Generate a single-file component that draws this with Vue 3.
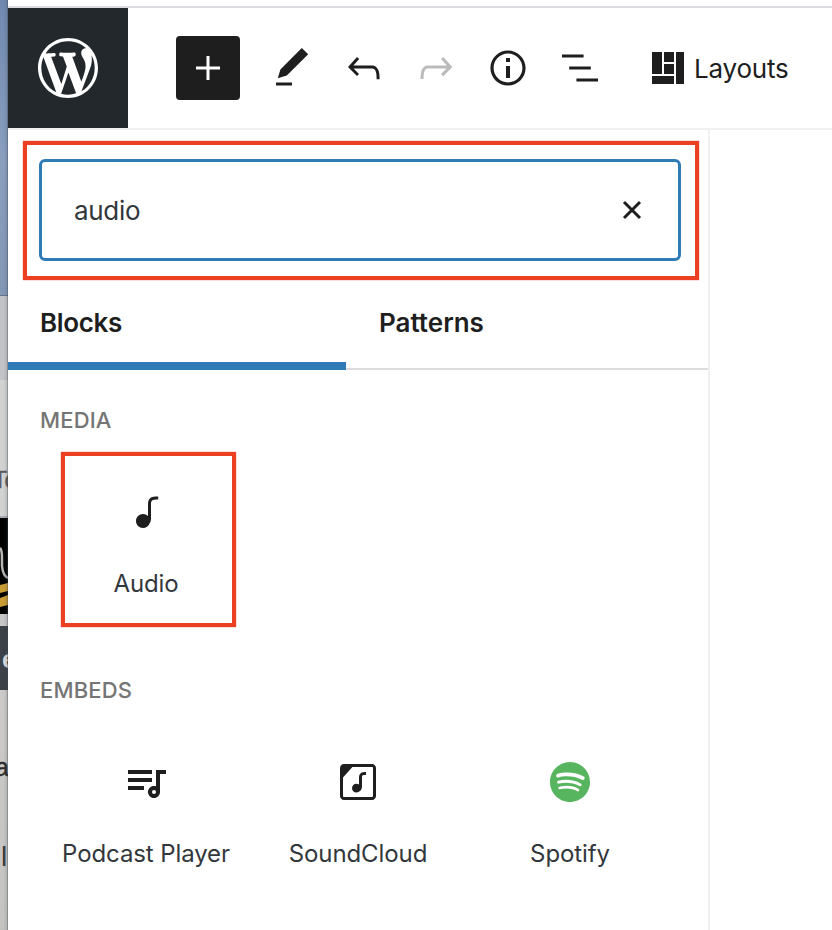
<script setup>
const tools = [
  { name: 'edit', path: 'M20.1 5.1L16.9 2 6.2 12.7l-1.3 4.4 4.5-1.3L20.1 5.1zM4 20.8h8v-1.5H4v1.5z' },
  { name: 'undo', path: 'M18.3 11.7c-.6-.6-1.4-.9-2.3-.9H6.7l2.9-3.3-1.1-1-4.5 5L8.5 16l1-1-2.7-2.7H16c.5 0 .9.2 1.3.5 1 1 1 3.4 1 4.5v.3h1.5v-.2c0-1.5 0-4.3-1.5-5.7z' },
  { name: 'redo', muted: true, path: 'M15.6 6.5l-1.1 1 2.9 3.3H8c-.9 0-1.7.3-2.3.9-1.4 1.5-1.4 4.2-1.4 5.6v.2h1.5v-.3c0-1.1 0-3.5 1-4.5.3-.3.7-.5 1.3-.5h9.2L14.5 15l1.1 1.1 4.6-4.6-4.6-5z' },
  { name: 'info', path: 'M12 3.2c-4.8 0-8.8 3.9-8.8 8.8 0 4.8 3.9 8.8 8.8 8.8 4.8 0 8.8-3.9 8.8-8.8 0-4.8-4-8.8-8.8-8.8zm0 16c-4 0-7.2-3.3-7.2-7.2C4.8 8 8 4.8 12 4.8s7.2 3.3 7.2 7.2c0 4-3.2 7.2-7.2 7.2zM11 17h2v-6h-2v6zm0-8h2V7h-2v2z' },
  { name: 'list', path: 'M13.8 5.2H3v1.5h10.8V5.2zm-3.6 12v1.5H21v-1.5H10.2zm7.2-6H6.6v1.5h10.8v-1.5z' }
]

const media = [
  { name: 'Audio', cls: 'audio', path: 'M17.7 4.3c-1.2 0-2.8 0-3.8 1-.6.6-.9 1.5-.9 2.6V14c-.6-.6-1.5-1-2.5-1C8.6 13 7 14.6 7 16.5S8.6 20 10.5 20c1.5 0 2.8-1 3.3-2.3.5-.8.7-1.8.7-2.5V7.9c0-.7.2-1.2.5-1.6.6-.6 1.8-.6 2.8-.6h.3V4.3h-.4z' }
]

const embeds = [
  { name: 'Podcast Player', cls: 'podcast', path: 'M15 6H3v2h12V6zm0 4H3v2h12v-2zM3 16h8v-2H3v2zM17 6v8.18c-.31-.11-.65-.18-1-.18-1.66 0-3 1.34-3 3s1.34 3 3 3 3-1.34 3-3V8h3V6h-5zM16 16a1 1 0 1 1 0 2 1 1 0 0 1 0-2z' },
  { name: 'SoundCloud', cls: 'soundcloud', path: 'M19 3H5c-1.1 0-2 .9-2 2v14c0 1.1.9 2 2 2h14c1.1 0 2-.9 2-2V5c0-1.1-.9-2-2-2zm.5 16c0 .3-.2.5-.5.5H5c-.3 0-.5-.2-.5-.5V9.8l4.7-5.3H19c.3 0 .5.2.5.5v14zM13.2 7.7c-.4.4-.7 1.1-.7 1.9v3.7c-.4-.3-.8-.4-1.3-.4-1.2 0-2.2 1-2.2 2.2 0 1.2 1 2.2 2.2 2.2.5 0 1-.2 1.4-.5.9-.6 1.4-1.6 1.4-2.6V9.6c0-.4.1-.6.2-.8.3-.3 1-.3 1.6-.3h.2V7h-.2c-.7 0-1.8 0-2.6.7z' },
  { name: 'Spotify', cls: 'spotify', path: 'm12 2c-5.5 0-10 4.5-10 10s4.5 10 10 10 10-4.5 10-10s-4.5-10-10-10m4.6 14.4c-.2.3-.6.4-.9.2-2.4-1.4-5.3-1.8-8.8-1-.3.1-.7-.1-.7-.5-.1-.3.1-.7.5-.7 3.8-.9 7.1-.5 9.7 1.1.2.2.3.6.2.9m1.2-2.7c-.3.4-.8.5-1.2.3-2.7-1.6-6.8-2.1-9.9-1.2-.4.2-.9 0-1.1-.4s.1-.9.5-1c3.6-1.1 8.1-.6 11.2 1.3.4.1.6.6.5 1m.1-2.8c-3.2-1.9-8.5-2.1-11.6-1.2-.5.2-1-.1-1.2-.6-.1-.5.2-1 .7-1.2 3.5-1.1 9.4-.9 13.1 1.3.4.3.6.9.3 1.3-.3.5-.9.6-1.3.4' }
]
</script>

<template>
  <div class="screen">
    <aside class="behind">
      <div class="sky"></div>
      <div class="chrome"></div>
      <div class="page-top"><span class="peek peek-to">To</span></div>
      <div class="banner">
        <svg width="8" height="96" viewBox="0 0 8 96">
          <path d="M0 30Q2 32 2 40V48Q3 58 8 60" fill="none" stroke="#b5b5b5" stroke-width="2.5" />
          <path d="M0 67L8 65V73L0 75zM0 80L8 77V87L0 89z" fill="#c99c35" />
        </svg>
      </div>
      <div class="gap"></div>
      <div class="menu"><span class="peek peek-e">e</span></div>
      <div class="page">
        <span class="peek peek-a">a</span>
        <span class="peek peek-l">l</span>
      </div>
    </aside>

    <main class="editor">
      <header class="topbar">
        <div class="wp">
          <svg width="60" height="60" viewBox="0 0 20 20">
            <path d="M20 10c0-5.51-4.49-10-10-10C4.48 0 0 4.49 0 10c0 5.52 4.48 10 10 10 5.51 0 10-4.48 10-10zM7.78 15.37L4.37 6.22c.55-.02 1.17-.08 1.17-.08.5-.06.44-1.13-.06-1.11 0 0-1.45.11-2.37.11-.18 0-.37 0-.58-.01C4.12 2.69 6.87 1.11 10 1.11c2.33 0 4.45.87 6.05 2.34-.68-.11-1.65.39-1.65 1.58 0 .74.45 1.36.9 2.1.35.61.55 1.36.55 2.46 0 1.49-1.4 5-1.4 5l-3.03-8.37c.54-.02.82-.17.82-.17.5-.05.44-1.25-.06-1.22 0 0-1.44.12-2.38.12-.87 0-2.33-.12-2.33-.12-.5-.03-.56 1.2-.06 1.22l.92.08 1.26 3.41zM17.41 10c.24-.64.74-1.87.43-4.25.7 1.29 1.05 2.71 1.05 4.25 0 3.29-1.73 6.24-4.4 7.78.97-2.59 1.94-5.2 2.92-7.78zM6.1 18.09C3.12 16.65 1.11 13.53 1.11 10c0-1.3.23-2.48.72-3.59C3.25 10.3 4.67 14.2 6.1 18.09zm4.03-6.63l2.58 6.98c-.86.29-1.76.45-2.71.45-.79 0-1.57-.11-2.29-.33.81-2.38 1.62-4.74 2.42-7.1z" />
          </svg>
        </div>
        <button class="inserter" aria-label="Toggle block inserter">
          <svg width="24" height="24" viewBox="0 0 24 24"><path d="M12 0V24M0 12H24" stroke="#fff" stroke-width="3" /></svg>
        </button>
        <div class="tools">
          <svg v-for="t in tools" :key="t.name" :class="{ muted: t.muted }" width="48" height="48" viewBox="0 0 24 24"><path :d="t.path" /></svg>
        </div>
        <div class="layouts">
          <svg width="32" height="32" viewBox="0 0 32 32"><path d="M0 0h10v22H0zM12 0h10v10H12zM12 12h10v10H12zM24 0h8v32h-8zM0 24h22v8H0z" /></svg>
          <span>Layouts</span>
        </div>
      </header>

      <section class="panel">
        <div class="callout search-callout">
          <div class="search">
            <span>audio</span>
            <svg width="20" height="20" viewBox="0 0 20 20"><path d="M2 2L18 18M18 2L2 18" stroke="#1e1e1e" stroke-width="3" /></svg>
          </div>
        </div>
        <nav class="tabs">
          <div class="tab active">Blocks</div>
          <div class="tab second">Patterns</div>
        </nav>
        <h2 class="heading">Media</h2>
        <div class="grid media-grid">
          <div v-for="b in media" :key="b.name" class="callout block chosen" :class="b.cls">
            <svg width="48" height="48" viewBox="0 0 24 24"><path :d="b.path" /></svg>
            <span>{{ b.name }}</span>
          </div>
        </div>
        <h2 class="heading">Embeds</h2>
        <div class="grid">
          <div v-for="b in embeds" :key="b.name" class="block" :class="b.cls">
            <svg width="48" height="48" viewBox="0 0 24 24"><path fill-rule="evenodd" :d="b.path" /></svg>
            <span>{{ b.name }}</span>
          </div>
        </div>
      </section>
    </main>
  </div>
</template>

<style>
body { background: #fff; overflow: hidden; }
</style>

<style scoped>
* { box-sizing: border-box; }
.screen { display: flex; width: 832px; height: 930px; overflow: hidden; background: #fff; color: #1e1e1e; font-family: Inter, "Liberation Sans", sans-serif; }
svg { display: block; flex: none; fill: #1e1e1e; }

.behind { display: flex; flex-direction: column; flex: none; width: 8px; height: 930px; overflow: hidden; position: relative; }
.behind::after { content: ""; position: absolute; inset: 0; box-shadow: inset -1px 0 rgba(60, 65, 75, .35), inset -3px 0 2px rgba(60, 65, 75, .12); }
.sky { height: 296px; flex: none; background: linear-gradient(#7189b0, #8a9fbe 55%, #8297b4); border-bottom: 1px solid #66758c; }
.chrome { height: 84px; flex: none; background: #c2c3c6; }
.page-top { height: 138px; flex: none; background: #d2d2d2; border-bottom: 2px solid #aaaab2; padding-top: 85px; }
.banner { height: 96px; flex: none; background: #000; }
.gap { height: 12px; flex: none; background: #c8c7c8; }
.menu { height: 64px; flex: none; background: #3c4247; padding-top: 16px; }
.page { flex: 1; background: linear-gradient(#cbcac8, #c5c4c2); padding-top: 59px; }
.peek { display: block; font-family: "Liberation Sans", sans-serif; white-space: nowrap; }
.peek-to { font-size: 23px; line-height: 30px; margin-left: -7px; color: #5a5a5a; -webkit-text-stroke: .4px #5a5a5a; }
.peek-e { font-size: 26px; line-height: 34px; margin-left: 2px; color: #ddd; font-weight: 700; }
.peek-a { font-size: 25px; line-height: 36px; margin-left: -5px; color: #2c2c2c; -webkit-text-stroke: .5px #2c2c2c; }
.peek-l { font-size: 28px; line-height: 36px; margin: 54px 0 0 1px; color: #3c3c3c; }

.editor { flex: 1; min-width: 0; padding-top: 6px; }
.topbar { display: flex; align-items: center; height: 124px; border-top: 2px solid #dcdde0; border-bottom: 2px solid #f0f0f0; }
.wp { display: flex; align-items: center; justify-content: center; width: 120px; height: 120px; background: #23282d; }
.wp svg { fill: #fff; }
.inserter { display: flex; align-items: center; justify-content: center; width: 64px; height: 64px; margin-left: 48px; padding: 0; border: 0; border-radius: 4px; background: #1e1e1e; }
.tools { display: flex; gap: 24px; margin-left: 28px; }
.muted { fill: #bbb; }
.layouts { display: flex; align-items: center; gap: 10px; margin-left: 48px; font-size: 26px; letter-spacing: -.2px; }

.panel { width: 702px; height: 800px; padding-top: 11px; border-right: 2px solid #f0f0f0; }
.callout { border: 4px solid #ec4023; box-shadow: 0 0 1px #ec4023; }
.search-callout { width: 676px; height: 139px; margin-left: 15px; padding: 14px 14px 15px 12px; }
.search { display: flex; align-items: center; justify-content: space-between; width: 642px; height: 102px; padding: 0 36px 0 32px; border: 3px solid #2f7bb5; border-radius: 6px; color: #32373c; font-size: 26px; letter-spacing: -.3px; }
.tabs { display: flex; height: 90px; border-bottom: 2px solid #ddd; }
.tab { width: 338px; height: 90px; padding: 23px 32px 0; font-size: 26px; line-height: 40px; font-weight: 600; letter-spacing: -.35px; }
.tab.second { padding-left: 33px; letter-spacing: 0; }
.tab.active { border-bottom: 8px solid #2f7bb5; }
.heading { margin: 34px 0 0 32px; color: #757575; font-size: 22px; line-height: 32px; font-weight: 500; letter-spacing: .15px; text-transform: uppercase; }
.grid { display: grid; grid-template-columns: repeat(3, 212px); margin: 16px 0 0 32px; }
.media-grid { height: 188px; }
.block { display: flex; flex-direction: column; align-items: center; height: 176px; padding-top: 36px; color: #32373c; font-size: 24px; line-height: 32px; letter-spacing: -.1px; white-space: nowrap; }
.block span { margin-top: 32px; }
.block.chosen { width: 175px; height: 175px; margin-left: 21px; padding-top: 32px; padding-right: 5px; }
.spotify svg { fill: #57b560; }
</style>
